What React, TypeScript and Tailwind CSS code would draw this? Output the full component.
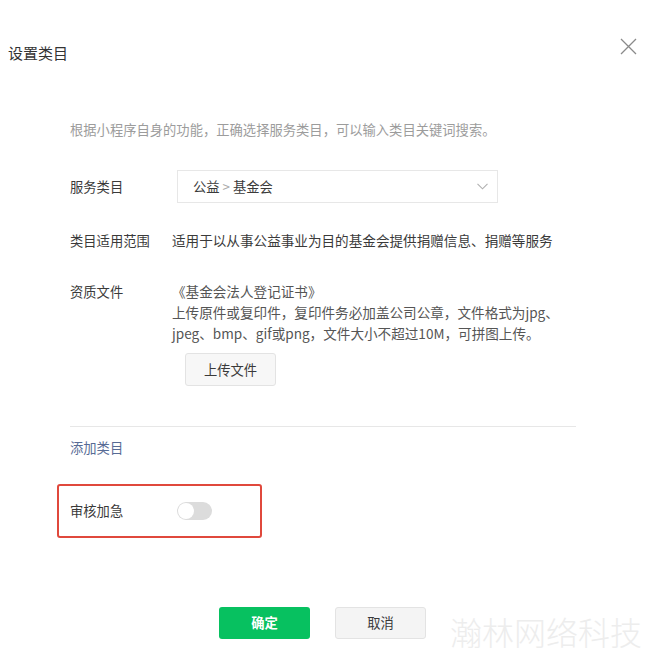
import React from "react";

const Label = ({ children }: { children: React.ReactNode }) => (
  <div className="w-[102px] shrink-0 text-[13.3px] leading-[21px] text-[#3a3a3a]">{children}</div>
);

export default function App() {
  return (
    <div className="w-[651px] h-[657px] bg-white overflow-hidden font-['Noto_Sans_CJK_SC',sans-serif] text-[#3a3a3a]">
      {/* header */}
      <div className="flex items-start justify-between pl-2 pr-[14px] pt-[38px]">
        <div className="mt-[5px] text-[15px] leading-[20px] text-[#333]">设置类目</div>
        <svg width="17" height="17" viewBox="0 0 17 17">
          <path d="M1 1L16 16M16 1L1 16" stroke="#8a8a8a" strokeWidth="1.3" fill="none" />
        </svg>
      </div>

      <div className="pl-[70px]">
        <div className="mt-[57px] text-[13.3px] leading-[20px] text-[#9c9c9c]">
          根据小程序自身的功能，正确选择服务类目，可以输入类目关键词搜索。
        </div>

        {/* 服务类目 */}
        <div className="mt-[30px] flex items-center h-[33px]">
          <Label>服务类目</Label>
          <div className="ml-[5px] w-[321px] h-[33px] border border-[#e7e7e7] bg-white flex items-center justify-between pl-[15px] pr-[9px]">
            <span className="text-[13.3px] text-[#3a3a3a]">
              公益 <span className="text-[#aaa]">&gt;</span> 基金会
            </span>
            <svg width="11" height="7" viewBox="0 0 11 7">
              <path d="M0.5 0.8L5.5 5.8L10.5 0.8" stroke="#b0b0b0" strokeWidth="1.1" fill="none" />
            </svg>
          </div>
        </div>

        {/* 类目适用范围 */}
        <div className="mt-[27px] flex">
          <Label>类目适用范围</Label>
          <div className="text-[13.6px] leading-[21px]">适用于以从事公益事业为目的基金会提供捐赠信息、捐赠等服务</div>
        </div>

        {/* 资质文件 */}
        <div className="mt-[30px] flex">
          <Label>资质文件</Label>
          <div>
            <div className="text-[13.6px] leading-[21px] text-[#555] whitespace-nowrap">
              《基金会法人登记证书》
              <br />
              上传原件或复印件，复印件务必加盖公司公章，文件格式为jpg、
              <br />
              jpeg、bmp、gif或png，文件大小不超过10M，可拼图上传。
            </div>
            <div className="mt-[9px] ml-[13px] w-[91px] h-[33px] flex items-center justify-center border border-[#e3e3e3] bg-[#f7f7f7] rounded-[3px] text-[13.3px] text-[#3a3a3a]">
              上传文件
            </div>
          </div>
        </div>

        <div className="mt-[40px] w-[506px] border-t border-[#e7e7e7]" />

        <div className="mt-[11px] text-[13.3px] leading-[20px] text-[#576b95]">添加类目</div>

        {/* 审核加急 */}
        <div className="mt-[26px] -ml-[13px] w-[205px] h-[54px] border-2 border-[#e0483c] rounded-[3px] flex items-center pl-[11px]">
          <div className="w-[107px] shrink-0 text-[13.3px] text-[#3a3a3a]">审核加急</div>
          <div className="w-[35px] h-[18px] rounded-full bg-[#dcdcdc] flex items-center pl-[1px]">
            <div className="w-[16px] h-[16px] rounded-full bg-white" />
          </div>
        </div>
      </div>

      {/* footer */}
      <div className="mt-[69px] pl-[219px] flex items-start">
        <div className="w-[91px] h-[32px] rounded-[3px] bg-[#07c160] text-white text-[13.3px] font-bold flex items-center justify-center">
          确定
        </div>
        <div className="ml-[25px] w-[91px] h-[32px] rounded-[3px] bg-[#f4f4f4] border border-[#e3e3e3] text-[#3a3a3a] text-[13.3px] flex items-center justify-center">
          取消
        </div>
        <div className="ml-[24px] mt-[8px] text-[32px] leading-[32px] font-light text-[#ededed] whitespace-nowrap">瀚林网络科技</div>
      </div>
    </div>
  );
}
